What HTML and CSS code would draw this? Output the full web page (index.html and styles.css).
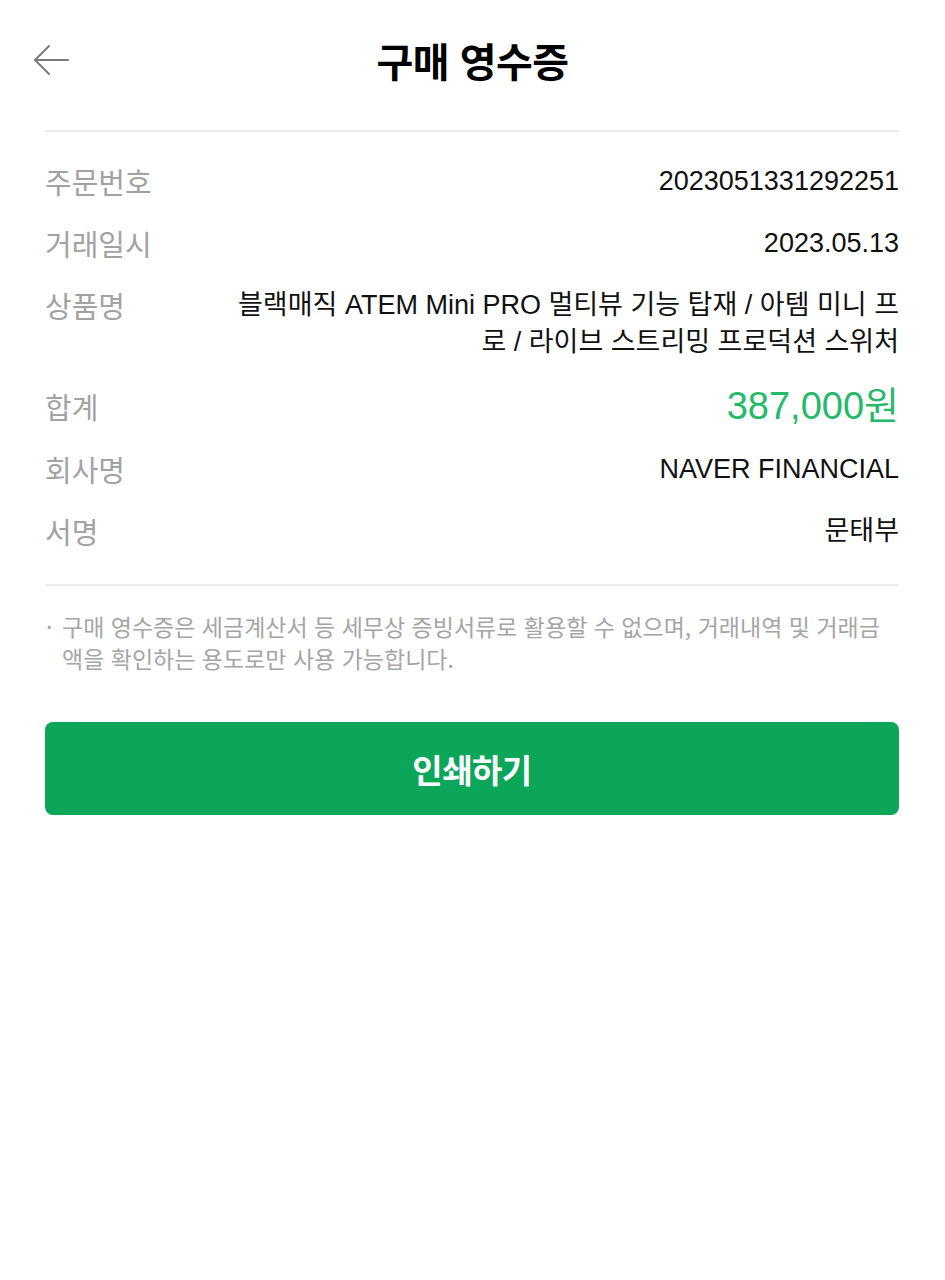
FILE: index.html
```html
<!DOCTYPE html>
<html lang="ko">
<head>
<meta charset="utf-8">
<title>구매 영수증</title>
<link rel="stylesheet" href="styles.css">
</head>
<body>
<div class="screen">
  <header class="topbar">
    <button class="back" aria-label="뒤로">
      <svg width="36" height="32" viewBox="0 0 36 32" fill="none" stroke="#7a7a7a" stroke-width="2" stroke-linecap="round" stroke-linejoin="round">
        <path d="M2 16 H35"/>
        <path d="M16 2 L2 16 L16 30"/>
      </svg>
    </button>
    <h1 class="title">구매 영수증</h1>
    <span class="spacer"></span>
  </header>

  <main class="content">
    <dl class="receipt">
      <div class="row">
        <dt class="label">주문번호</dt>
        <dd class="value">2023051331292251</dd>
      </div>
      <div class="row">
        <dt class="label">거래일시</dt>
        <dd class="value">2023.05.13</dd>
      </div>
      <div class="row">
        <dt class="label">상품명</dt>
        <dd class="value">블랙매직 ATEM Mini PRO 멀티뷰 기능 탑재 / 아템 미니 프로 / 라이브 스트리밍 프로덕션 스위처</dd>
      </div>
      <div class="row row-total">
        <dt class="label">합계</dt>
        <dd class="value amount">387,000원</dd>
      </div>
      <div class="row">
        <dt class="label">회사명</dt>
        <dd class="value">NAVER FINANCIAL</dd>
      </div>
      <div class="row">
        <dt class="label">서명</dt>
        <dd class="value">문태부</dd>
      </div>
    </dl>

    <ul class="notes">
      <li>구매 영수증은 세금계산서 등 세무상 증빙서류로 활용할 수 없으며, 거래내역 및 거래금액을 확인하는 용도로만 사용 가능합니다.</li>
    </ul>

    <button class="print">인쇄하기</button>
  </main>
</div>
</body>
</html>
```

FILE: styles.css
```css
* {
  box-sizing: border-box;
}

html, body {
  margin: 0;
  padding: 0;
  background: #ffffff;
}

body {
  font-family: "Liberation Sans", "Noto Sans CJK KR", Arial, sans-serif;
  color: #111111;
}

.screen {
  width: 945px;
}

.topbar {
  display: grid;
  grid-template-columns: 1fr auto 1fr;
  align-items: center;
  height: 120px;
  padding: 0 33px;
}

.back {
  justify-self: start;
  display: flex;
  align-items: center;
  padding: 0;
  margin: 0;
  border: 0;
  background: none;
  cursor: pointer;
}

.title {
  margin: 0;
  font-family: "Noto Sans CJK KR", sans-serif;
  font-size: 40px;
  font-weight: 700;
  letter-spacing: -0.5px;
  color: #000000;
  line-height: 1;
}

.content {
  margin: 10px 46px 0 45px;
}

.receipt {
  margin: 0;
  padding: 31px 0 34px;
  border-top: 2px solid #ebebeb;
  border-bottom: 2px solid #ebebeb;
  display: flex;
  flex-direction: column;
  gap: 25px;
}

.row {
  display: flex;
  align-items: flex-start;
  justify-content: space-between;
}

.row-total {
  align-items: center;
}

.label {
  flex: 0 0 186px;
  margin: 0;
  font-family: "Noto Sans CJK KR", sans-serif;
  font-size: 29px;
  line-height: 37px;
  color: #a2a2a2;
}

.value {
  flex: 1;
  margin: 0;
  font-size: 27px;
  line-height: 37px;
  text-align: right;
  color: #111111;
}

.amount {
  font-size: 38px;
  line-height: 40px;
  color: #25b96a;
}

.notes {
  list-style: none;
  margin: 0;
  padding: 24px 15px 0 17px;
}

.notes li {
  position: relative;
  font-family: "Noto Sans CJK KR", sans-serif;
  font-size: 23px;
  line-height: 32px;
  color: #a5a5a5;
}

.notes li::before {
  content: "·";
  position: absolute;
  left: -16px;
  top: 0;
  color: #a5a5a5;
}

.print {
  display: block;
  width: 100%;
  height: 93px;
  margin-top: 48px;
  border: 0;
  border-radius: 8px;
  background: #0ba65a;
  color: #ffffff;
  font-family: "Noto Sans CJK KR", sans-serif;
  font-size: 33px;
  font-weight: 700;
  letter-spacing: -0.5px;
  cursor: pointer;
}
```
